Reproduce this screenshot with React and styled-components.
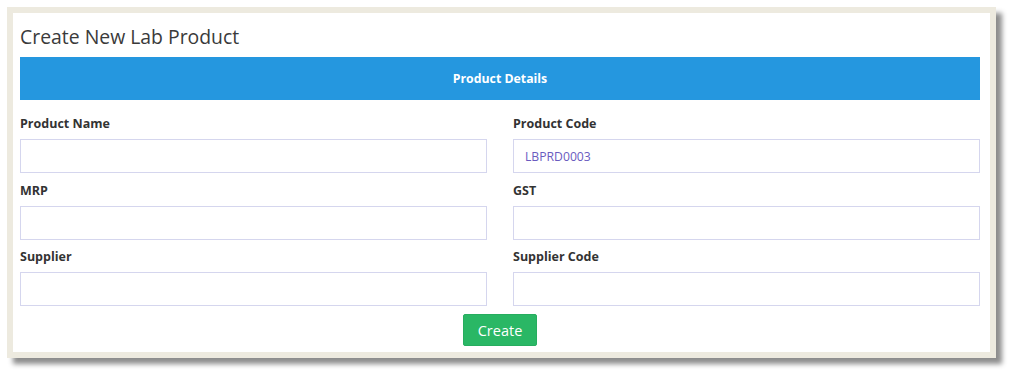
import React from "react";
import styled, { createGlobalStyle } from "styled-components";

const Global = createGlobalStyle`
  html, body { margin: 0; padding: 0; background: #ffffff; }
  body { font-family: "Open Sans", "Noto Sans", sans-serif; color: #333; }
  * { box-sizing: border-box; }
`;

const Page = styled.div`
  padding: 7px 15px 15px 7px;
  width: 1011px;
  height: 373px;
`;

const Frame = styled.div`
  width: 989px;
  height: 351px;
  border: 6px solid #edeadf;
  background: #ffffff;
  box-shadow: 6px 6px 5px rgba(0, 0, 0, 0.45);
  padding: 8px 10px 0 7px;
  display: flex;
  flex-direction: column;
`;

const Title = styled.h2`
  margin: 0;
  padding-top: 1px;
  font-size: 19.4px;
  font-weight: 400;
  color: #3a3a3a;
  line-height: 30px;
  height: 36px;
`;

const SectionBar = styled.div`
  height: 43px;
  background: #2597df;
  color: #fff;
  font-weight: 700;
  font-size: 12.3px;
  display: flex;
  align-items: center;
  justify-content: center;
`;

const Grid = styled.div`
  display: grid;
  grid-template-columns: 467px 467px;
  column-gap: 26px;
  margin-top: 14px;
  row-gap: 7.5px;
`;

const Field = styled.div`
  display: flex;
  flex-direction: column;
`;

const Label = styled.label`
  font-size: 12.5px;
  font-weight: 700;
  color: #333;
  line-height: 18px;
  margin-top: 1px;
  margin-bottom: 6px;
`;

const Input = styled.input`
  height: 34px;
  width: 100%;
  border: 1px solid #d5d6ee;
  background: #fff;
  padding: 0 11px;
  font-family: "Open Sans", "Noto Sans", sans-serif;
  font-size: 12.2px;
  color: #6a5bbf;
  outline: none;
`;

const Actions = styled.div`
  display: flex;
  justify-content: center;
  margin-top: 8px;
`;

const Button = styled.button`
  width: 74px;
  height: 32px;
  background: #2ab765;
  border: 1px solid #27ad5f;
  border-radius: 2px;
  color: #fff;
  font-family: "Open Sans", "Noto Sans", sans-serif;
  font-size: 14.5px;
  padding: 0;
`;

const fields = [
  { label: "Product Name", value: "" },
  { label: "Product Code", value: "LBPRD0003" },
  { label: "MRP", value: "" },
  { label: "GST", value: "" },
  { label: "Supplier", value: "" },
  { label: "Supplier Code", value: "" },
];

export default function App() {
  return (
    <>
      <Global />
      <Page>
        <Frame>
          <Title>Create New Lab Product</Title>
          <SectionBar>Product Details</SectionBar>
          <Grid>
            {fields.map((f) => (
              <Field key={f.label}>
                <Label>{f.label}</Label>
                <Input defaultValue={f.value} />
              </Field>
            ))}
          </Grid>
          <Actions>
            <Button>Create</Button>
          </Actions>
        </Frame>
      </Page>
    </>
  );
}
